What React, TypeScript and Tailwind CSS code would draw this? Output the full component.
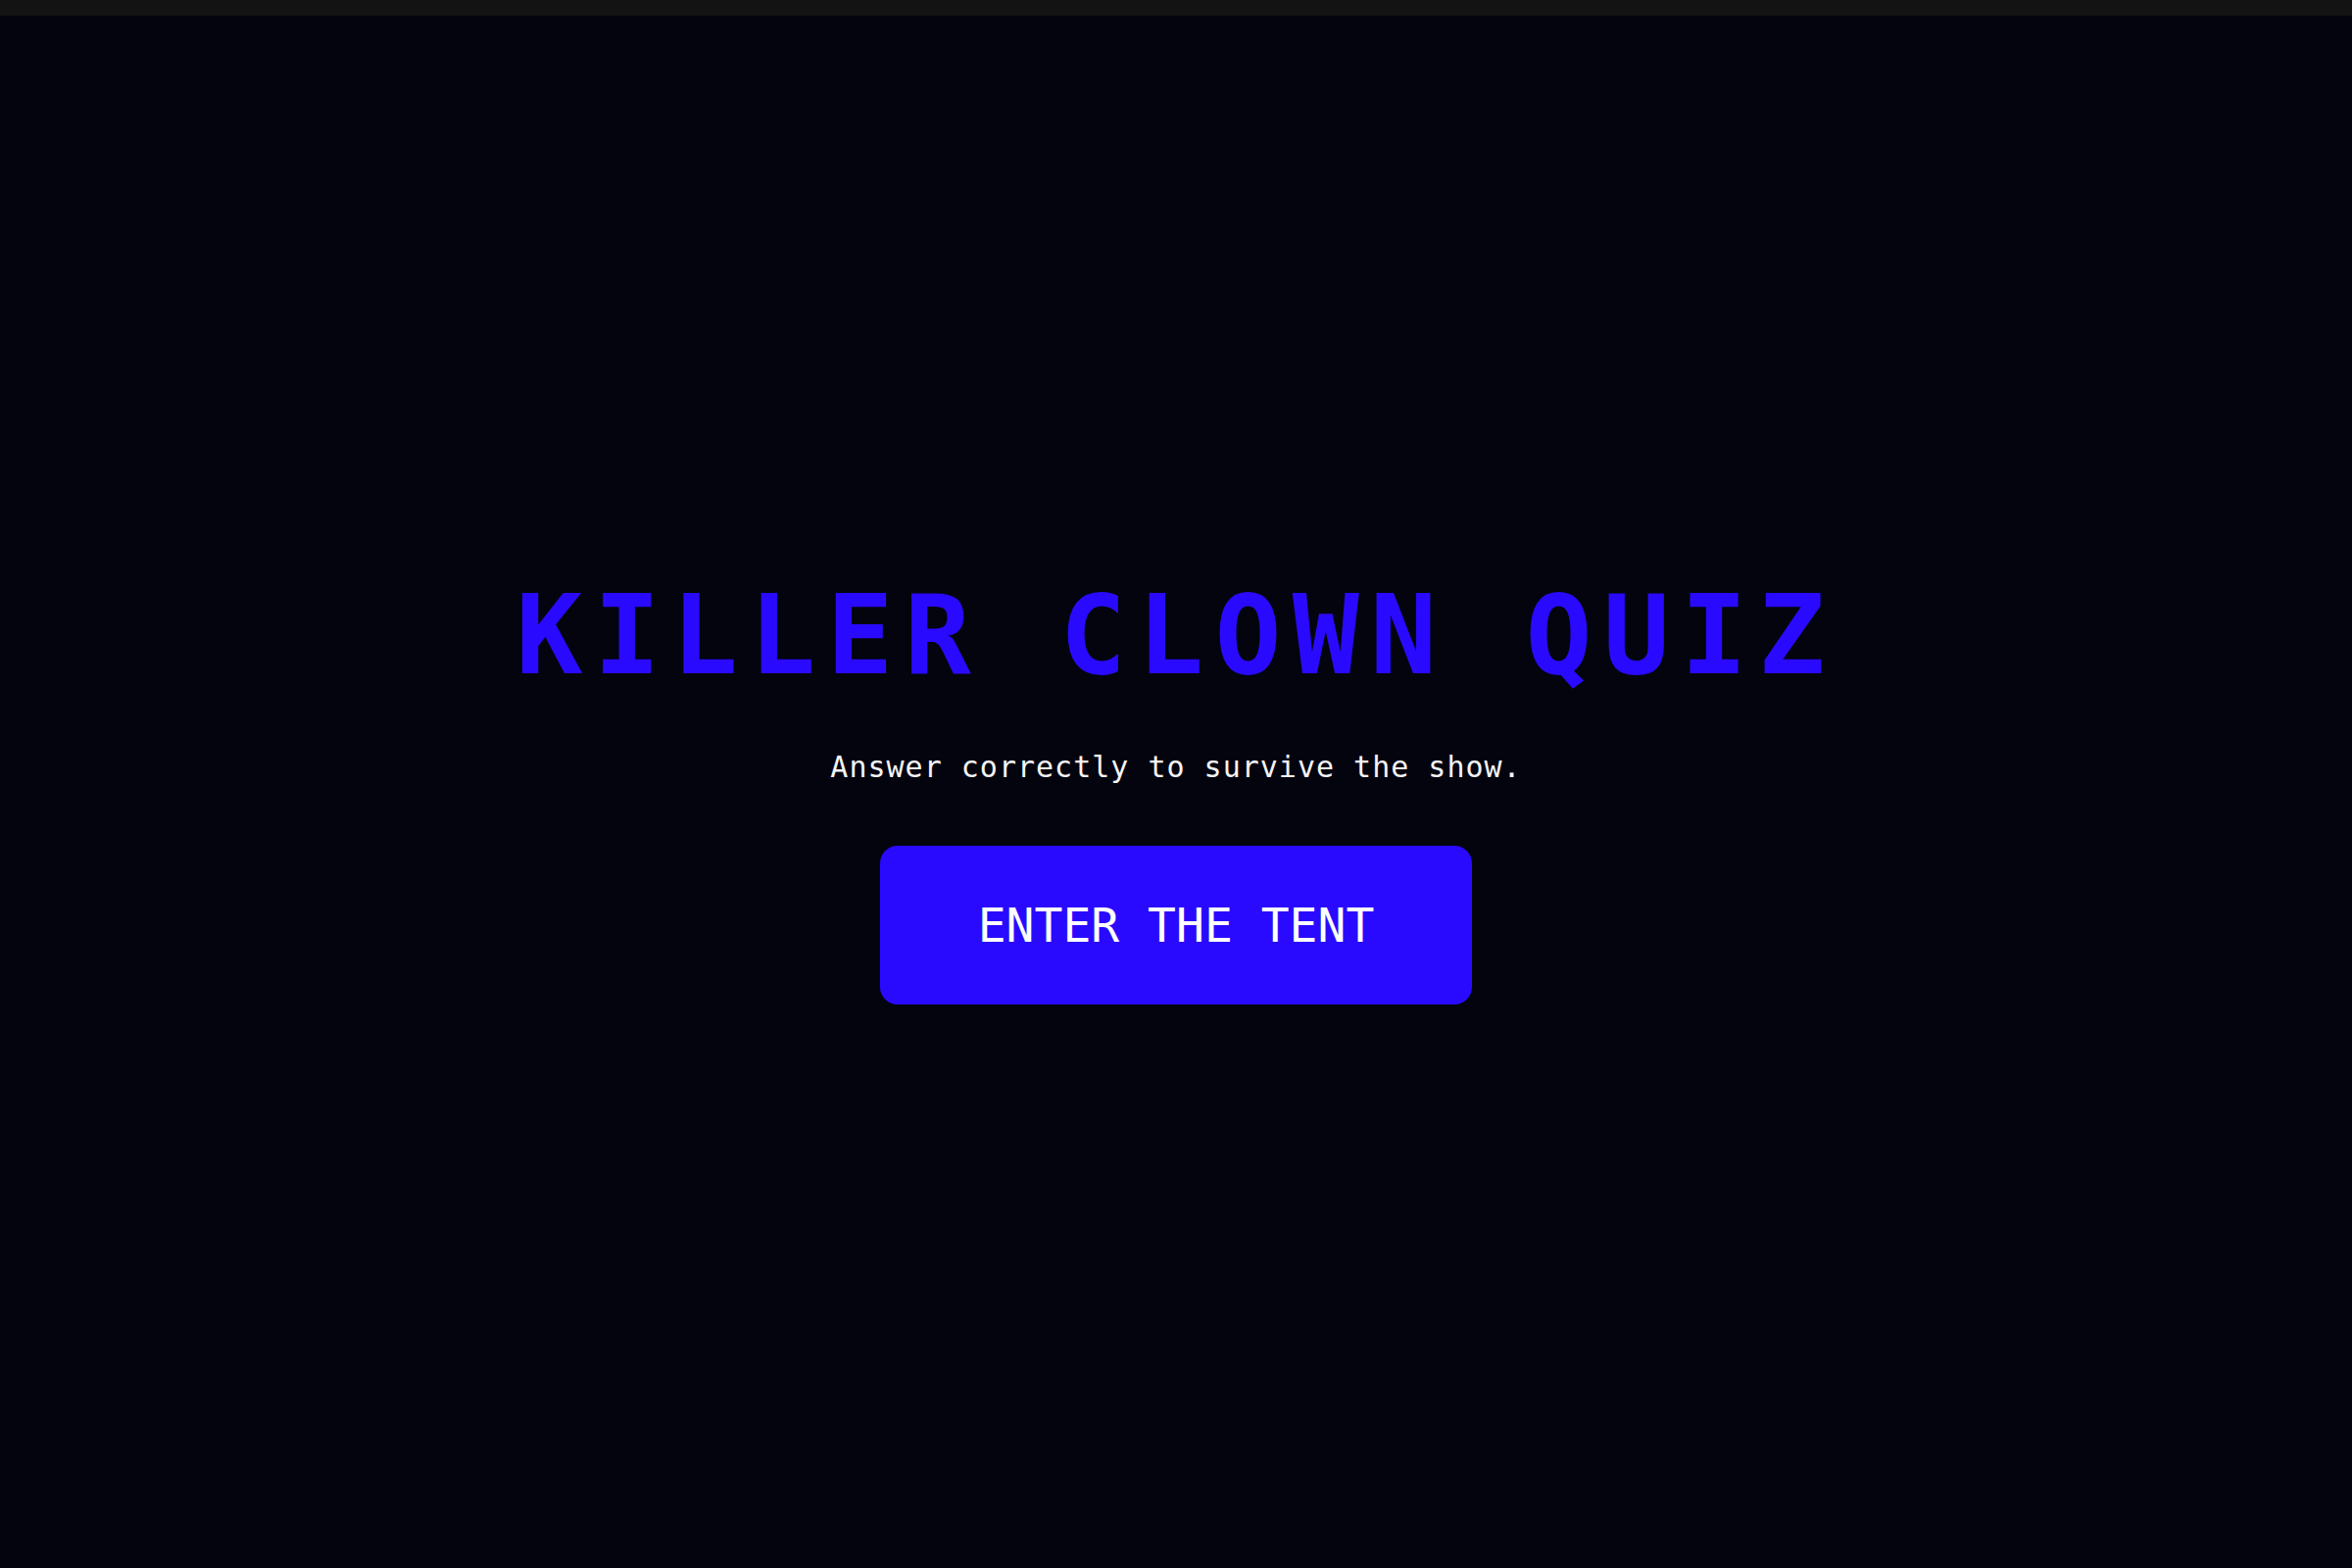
import React from "react";

// Splash screen for the quiz: a thin top strip, then the title block centred in the rest
export default function App() {
  return (
    <div className="flex min-h-screen w-full flex-col bg-[#04040e] font-['DejaVu_Sans_Mono','Liberation_Mono',monospace]">
      <div className="h-4 w-full bg-[#131313]" />

      <main className="flex flex-1 flex-col items-center justify-center">
        <h1 className="text-[113px] font-bold leading-none tracking-[11.2px] text-[#2a0aff]">
          KILLER CLOWN QUIZ
        </h1>

        <p className="mt-[63px] text-[30px] leading-none tracking-[1px] text-[#f4f4f6]">
          Answer correctly to survive the show.
        </p>

        <button
          type="button"
          className="mt-[65px] flex h-[162px] items-center justify-center rounded-[18px] bg-[#2a0aff] px-[100px] text-[48px] leading-none text-white"
        >
          ENTER THE TENT
        </button>
      </main>
    </div>
  );
}
